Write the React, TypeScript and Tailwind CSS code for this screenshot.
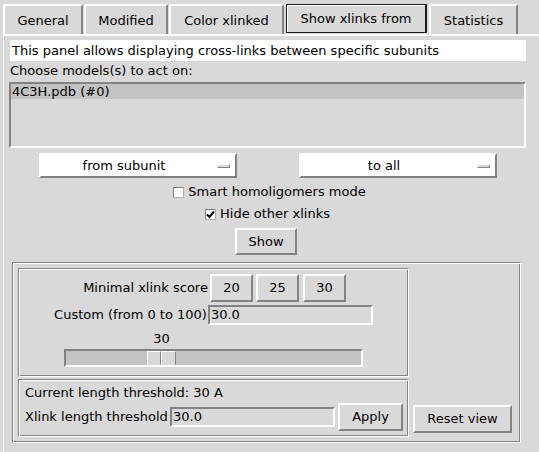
import React from "react";

const raised =
  "border-2 border-t-white border-l-white border-b-[#828282] border-r-[#828282]";
const sunken =
  "border-2 border-t-[#828282] border-l-[#828282] border-b-white border-r-white";
const groove =
  "border border-t-[#828282] border-l-[#828282] border-b-white border-r-white shadow-[inset_1px_1px_0_#fff,inset_-1px_-1px_0_#828282]";

const Tab: React.FC<{ label: string; width: string; selected?: boolean }> = ({
  label,
  width,
  selected = false,
}) => {
  if (selected) {
    return (
      <div
        className={`${width} h-[29px] mb-[1px] pt-[1px] flex items-center justify-center border border-[#1c1c1c] border-r-2 shadow-[inset_1px_1px_0_#fff]`}
      >
        {label}
      </div>
    );
  }
  return (
    <div
      className={`${width} h-[30px] pt-[1px] flex items-center justify-center border-t-2 border-l-2 border-r-2 border-t-white border-l-white border-r-[#828282] rounded-t-[2px]`}
    >
      {label}
    </div>
  );
};

const Button: React.FC<{ label: string; className?: string }> = ({ label, className = "" }) => (
  <div className={`${raised} bg-[#d9d9d9] flex items-center justify-center ${className}`}>
    {label}
  </div>
);

const Dropdown: React.FC<{ label: string }> = ({ label }) => (
  <div className="w-[198px] h-[25px] bg-white border-2 border-white border-b-[#828282] border-r-[#828282] flex items-center">
    <span className="flex-1 text-center">{label}</span>
    <div className="w-[13px] h-[4px] ml-[9px] mr-[5px] bg-[#d9d9d9] border border-t-white border-l-white border-b-[#828282] border-r-[#828282]" />
  </div>
);

const Check: React.FC<{ label: string; checked?: boolean }> = ({ label, checked = false }) => (
  <div className="h-[20px] flex items-center">
    <div className="w-[11px] h-[11px] bg-white border border-t-[#828282] border-l-[#828282] border-b-[#b0b0b0] border-r-[#b0b0b0] flex items-center justify-center">
      {checked && (
        <svg width="9" height="9" viewBox="0 0 9 9">
          <path d="M1 4.5 L3.5 7 L8 1.5" stroke="#000" strokeWidth="2" fill="none" />
        </svg>
      )}
    </div>
    <span className="ml-[4px]">{label}</span>
  </div>
);

export default function App() {
  return (
    <div className="w-[539px] h-[452px] bg-[#d9d9d9] overflow-hidden font-['DejaVu_Sans',sans-serif] text-[13px] text-black">
      {/* tab row */}
      <div className="h-[34px] pl-[3px] flex items-end">
        <Tab label="General" width="w-[80px]" />
        <div className="w-[1px]" />
        <Tab label="Modified" width="w-[84px]" />
        <div className="w-[1px]" />
        <Tab label="Color xlinked" width="w-[115px]" />
        <div className="w-[2px]" />
        <Tab label="Show xlinks from" width="w-[141px]" selected />
        <div className="w-[2px]" />
        <Tab label="Statistics" width="w-[89px]" />
      </div>

      {/* panel */}
      <div className="ml-[3px] h-[418px] border-t-2 border-l border-white">
        <div className="ml-[5px] w-[517px] flex flex-col items-center">
          <div className="mt-[4px] ml-[1px] self-start w-[516px] h-[21px] bg-white px-[2px] leading-[22px]">
            This panel allows displaying cross-links between specific subunits
          </div>
          <div className="self-start ml-[1px] h-[19px] leading-[19px]">Choose models(s) to act on:</div>

          <div className={`mt-[2px] w-[517px] h-[66px] ${sunken}`}>
            <div className="h-[15px] leading-[15px] bg-[#c3c3c3] px-[1px]">4C3H.pdb (#0)</div>
          </div>

          <div className="mt-[5px] w-[458px] flex justify-between">
            <Dropdown label="from subunit" />
            <Dropdown label="to all" />
          </div>

          <div className="mt-[4px] ml-[4px]">
            <Check label="Smart homoligomers mode" />
          </div>
          <div className="mt-[2px]">
            <Check label="Hide other xlinks" checked />
          </div>

          <Button label="Show" className="mt-[4px] mr-[3px] w-[62px] h-[27px]" />

          {/* outer frame */}
          <div className={`mt-[7px] ml-[3px] self-start w-[509px] h-[181px] ${groove} p-[5px] flex items-end`}>
            <div className="flex flex-col gap-[2px]">
              {/* score frame */}
              <div className={`w-[391px] h-[109px] ${groove} flex flex-col items-center`}>
                <div className="mt-[5px] grid grid-cols-[auto_165px] gap-y-[3px] items-center whitespace-nowrap">
                  <div className="text-right">Minimal xlink score</div>
                  <div className="flex">
                    <Button label="20" className="ml-[2px] w-[43px] h-[28px]" />
                    <Button label="25" className="ml-[3px] w-[43px] h-[28px]" />
                    <Button label="30" className="ml-[4px] w-[43px] h-[28px]" />
                  </div>
                  <div className="text-right pr-[1px]">Custom (from 0 to 100)</div>
                  <div className={`w-[165px] h-[20px] ${sunken} leading-[16px] pl-[1px]`}>30.0</div>
                </div>
                <div className="mt-[5px] w-[299px] h-[16px] flex">
                  <div className="ml-[83px] w-[29px] text-center leading-[17px]">30</div>
                </div>
                <div className={`mt-[3px] w-[299px] h-[18px] ${sunken} bg-[#c3c3c3] flex`}>
                  <div className="ml-[81px] w-[29px] h-[14px] flex">
                    <div className="w-[14px] h-[14px] bg-[#d9d9d9] border border-t-white border-l-white border-b-[#d9d9d9] border-r-[#828282]" />
                    <div className="w-[15px] h-[14px] bg-[#d9d9d9] border border-t-white border-l-white border-b-[#d9d9d9] border-r-[#828282]" />
                  </div>
                </div>
              </div>

              {/* length frame */}
              <div className={`w-[391px] h-[58px] ${groove} pl-[6px]`}>
                <div className="mt-[4px] h-[18px] leading-[18px]">Current length threshold: 30 A</div>
                <div className="mt-[1px] flex items-center">
                  <div className="w-[145px] whitespace-nowrap">Xlink length threshold</div>
                  <div className={`w-[165px] h-[20px] ${sunken} leading-[16px] pl-[1px]`}>30.0</div>
                  <Button label="Apply" className="ml-[3px] w-[65px] h-[28px]" />
                </div>
              </div>
            </div>

            <Button label="Reset view" className="ml-[4px] mb-[4px] w-[99px] h-[28px]" />
          </div>
        </div>
      </div>
    </div>
  );
}
